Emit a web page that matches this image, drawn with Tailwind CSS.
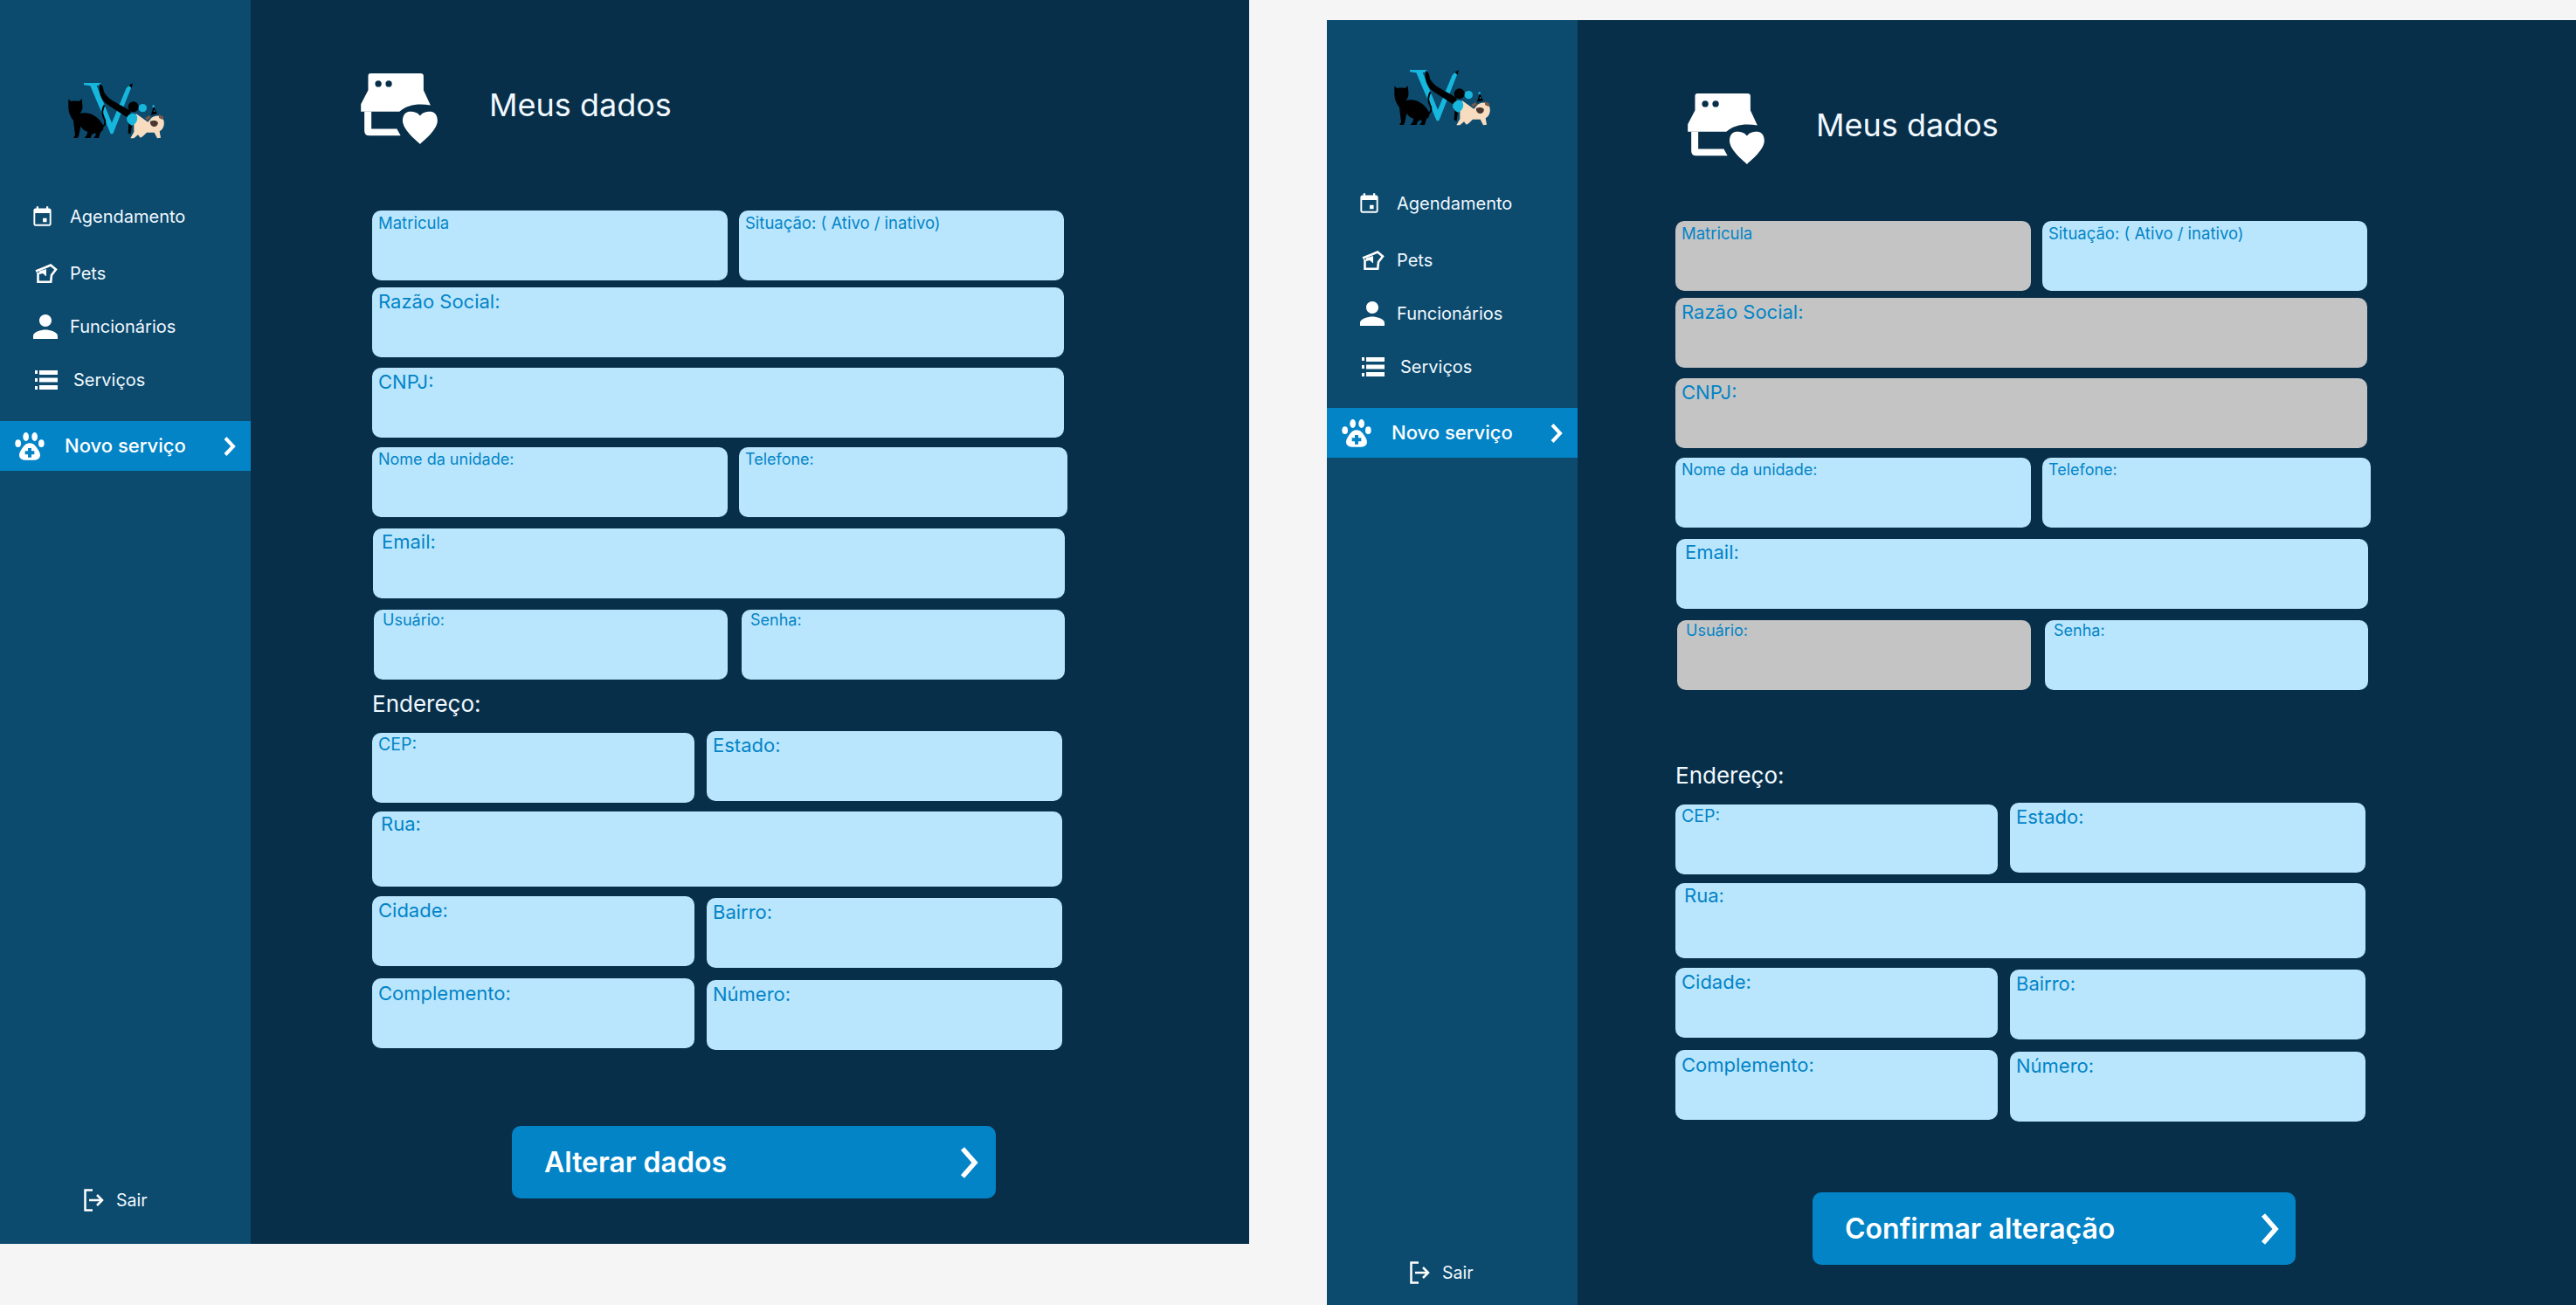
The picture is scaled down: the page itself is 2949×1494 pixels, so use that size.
<!DOCTYPE html>
<html lang="pt-BR">
<head>
    <meta charset="UTF-8">
    <title>Meus dados</title>
    <script src="https://cdn.jsdelivr.net/npm/@tailwindcss/browser@4"></script>
</head>
<body class="bg-[#f5f5f5] font-['Inter',sans-serif] overflow-hidden h-screen">
<div class="flex items-start gap-[89px] w-[2949px]">

    <!-- tela 1: meus dados -->
    <section class="flex w-[1430px] h-[1424px] shrink-0 bg-[#082f49]">
        <aside class="flex flex-col w-[287px] h-full shrink-0 bg-[#0c4a6e] pt-[85px] pb-[35px] text-[#f0f9ff]">
            <svg class="ml-[70px] shrink-0" width="125" height="80" viewBox="0 0 375 240">
                <path fill="#17b6dc" d="M78 30h58v7l-14 2 52 128 50-120 12-10 8 0-66 168h-8L100 40l-22-3z"/>
                <path fill="#000" d="M133 32c-6 28 2 56 26 72l76 50 4-28c-36-24-92-42-94-76-1-8-6-14-12-18zM232 38l14-7-4 16z"/>
                <path fill="#000" d="M25 86l10 7c8-2 18-2 26 0l10-8 2 20c2 12-2 22-8 30 14-4 34-2 50 8 14 8 24 22 30 34 2 10-2 18-10 22l-6 20h-18l8-10-2-8-12 6-4 12h-22l8-8 4-14c-10-2-18-8-24-18l-6 30-4 10H42l6-10-6-50c-8-10-16-24-17-44z"/>
                <path fill="none" stroke="#000" stroke-width="6" d="M135 182c18-4 20-18 12-32-6-12-10-26 2-44"/>
                <circle cx="248" cy="112" r="18" fill="#000"/>
                <circle cx="280" cy="116" r="14" fill="#17b6dc"/>
                <path fill="#000" d="M232 170l12 4-6 32-8-4z"/>
                <path fill="#f7dcc0" d="M258 136l40 28 12-14c14-12 36-10 42 8 4 14 0 30-14 38l4 22-12 2-10-20-26 0-14 14-8 4-8-10-14 12h-12l12-22 0-30-8-12z"/>
                <path fill="#17b6dc" d="M226 148c6-12 18-16 28-12 8 4 10 18 4 28-4 6-10 10-16 12-10-6-20-16-16-28z"/>
                <path fill="#7b5a48" d="M288 150l14-8 6 6-12 10zM336 138l16 8-4 10-12-6z"/>
                <path fill="#4a3730" d="M306 162c8-4 20-4 26 2 2 8-4 16-14 16-8-1-14-10-12-18z"/>
                <path fill="#000" d="M308 140l10-30 12 26z"/>
                <circle cx="317" cy="110" r="4" fill="#17b6dc"/>
                <circle cx="320" cy="126" r="2.5" fill="#17b6dc"/>
            </svg>
            <nav class="flex flex-col mt-[63px] text-[20px]">
                <a class="flex items-center h-10 pl-[35px] gap-[18px]">
                    <svg class="shrink-0" width="27" height="27" viewBox="0 0 24 24" fill="#fff"><path d="M16.5 13h-4v4h4v-4zM16 1v2H8V1H6v2H5c-1.11 0-1.99.9-1.99 2L3 19c0 1.1.89 2 2 2h14c1.1 0 2-.9 2-2V5c0-1.1-.9-2-2-2h-1V1h-2zm3.3 18.300H4.700V8h14.600v11.300z"/></svg>
                    <span>Agendamento</span>
                </a>
                <a class="flex items-center h-10 mt-[25px] pl-[40px] gap-[14px]">
                    <svg class="shrink-0" width="26" height="22" viewBox="0 0 26 22"><path fill="none" stroke="#fff" stroke-width="2.600" d="M1 8.500L11 4.500 18 1.500l6 5-5 6.500-.8 7.700H3.500v-11"/><path fill="#fff" d="M5 8.500l8-2.500v8.500l-4-3.500-4 1z"/></svg>
                    <span>Pets</span>
                </a>
                <a class="flex items-center h-10 mt-[21px] pl-[31px] gap-[7px]">
                    <svg class="shrink-0" width="42" height="42" viewBox="0 0 24 24" fill="#fff"><path d="M12 12c2.210 0 4-1.790 4-4s-1.790-4-4-4-4 1.790-4 4 1.790 4 4 4zm0 2c-2.670 0-8 1.340-8 4v2h16v-2c0-2.660-5.330-4-8-4z"/></svg>
                    <span>Funcionários</span>
                </a>
                <a class="flex items-center h-10 mt-[21px] pl-[40px] gap-[18px]">
                    <svg class="shrink-0" width="26" height="22" viewBox="0 0 26 22" fill="#fff"><path d="M0 0h3v4H0zM5 0h21v5H5zM0 9h3v4H0zM5 8.500h21v5H5zM0 18h3v4H0zM5 17h21v5H5z"/></svg>
                    <span>Serviços</span>
                </a>
                <a class="flex items-center h-[57px] mt-[27px] bg-[#0284c7] pl-[17px] gap-[23px] font-medium text-[22px] text-white">
                    <svg class="shrink-0" width="34" height="32" viewBox="24 45 102 96"><ellipse cx="35" cy="83" rx="10" ry="13" fill="#fff"/><ellipse cx="62" cy="60" rx="10" ry="15" fill="#fff"/><ellipse cx="92" cy="60" rx="10" ry="15" fill="#fff"/><ellipse cx="115" cy="83" rx="10" ry="13" fill="#fff"/><path fill="#fff" d="M75 82C60 82 52 95 44 108 36 120 36 138 58 140 68 140 82 140 92 140 114 138 114 120 106 108 98 95 90 82 75 82Z"/><path fill="#0284c7" d="M69 99h12v10h10v12H81v10H69v-10H59v-12h10z"/></svg>
                    <span>Novo serviço</span>
                    <svg class="ml-auto mr-[17px] shrink-0" width="14" height="22" viewBox="0 0 14 22"><path fill="none" stroke="#fff" stroke-width="4" d="M2 1.500L11 11 2 20.500"/></svg>
                </a>
            </nav>
            <a class="flex items-center mt-auto pl-[96px] gap-[14px] text-[19.5px]">
                <svg class="shrink-0" width="23" height="26" viewBox="0 0 23 26"><path fill="none" stroke="#fff" stroke-width="2.500" d="M10 1.500H1.500v23H10"/><path fill="none" stroke="#fff" stroke-width="2.500" d="M6 13h14M15 7l6 6-6 6"/></svg>
                <span>Sair</span>
            </a>
        </aside>
        <main class="flex-1 pt-[84px] pl-[126px]">
            <header class="flex items-center gap-[59px] h-[81px] text-[#f0f9ff] text-[36px]">
                <svg class="shrink-0" width="88" height="81" viewBox="39 72 264 244"><path fill="#fff" d="M72 72H245Q255 72 255 82V130L279 182C240 175 200 178 172 204H39V178L64 130V82Q64 72 72 72Z"/><circle cx="99" cy="108" r="11" fill="#082f49"/><circle cx="135" cy="108" r="11" fill="#082f49"/><path fill="#fff" d="M51 204V270Q51 287 68 287H176L163 263H75V204Z"/><path fill="#fff" d="M243 218C232 204 215 203 205 204 190 206 183 220 183 235 183 265 225 300 243 316 261 300 303 265 303 235 303 220 296 206 281 204 271 203 254 204 243 218Z"/></svg>
                <h1 class="pb-[9px]">Meus dados</h1>
            </header>
            <form class="flex flex-col mt-[76px] pl-[13px] text-[#0284c7]">
                <div class="flex gap-[13px]">
                    <div class="w-[407px] h-20 rounded-[10px] bg-[#bae6fd] pl-[7px] text-[18.5px] leading-[28px]">Matricula</div>
                    <div class="w-[372px] h-20 rounded-[10px] bg-[#bae6fd] pl-[7px] text-[18.5px] leading-[28px]">Situação: ( Ativo / inativo)</div>
                </div>
                <div class="w-[792px] h-20 mt-[8px] rounded-[10px] bg-[#bae6fd] pl-[7px] text-[22px] leading-[32px]">Razão Social:</div>
                <div class="w-[792px] h-20 mt-[12px] rounded-[10px] bg-[#bae6fd] pl-[7px] text-[22px] leading-[32px]">CNPJ:</div>
                <div class="flex gap-[13px] mt-[11px]">
                    <div class="w-[407px] h-20 rounded-[10px] bg-[#bae6fd] pl-[7px] text-[18px] leading-[28px]">Nome da unidade:</div>
                    <div class="w-[376px] h-20 rounded-[10px] bg-[#bae6fd] pl-[7px] text-[18px] leading-[28px]">Telefone:</div>
                </div>
                <div class="w-[792px] h-20 mt-[13px] ml-px rounded-[10px] bg-[#bae6fd] pl-[10px] text-[22px] leading-[30px]">Email:</div>
                <div class="flex gap-[16px] mt-[13px] ml-[2px]">
                    <div class="w-[405px] h-20 rounded-[10px] bg-[#bae6fd] pl-[10px] text-[18px] leading-[23px]">Usuário:</div>
                    <div class="w-[370px] h-20 rounded-[10px] bg-[#bae6fd] pl-[10px] text-[18px] leading-[23px]">Senha:</div>
                </div>
                <h2 class="mt-[11px] text-[#f0f9ff] text-[26px] leading-[34px]">Endereço:</h2>
                <div class="flex items-start gap-[14px] mt-[14px]">
                    <div class="w-[369px] h-20 mt-[2px] rounded-[10px] bg-[#bae6fd] pl-[7px] text-[19.5px] leading-[26px]">CEP:</div>
                    <div class="w-[407px] h-20 rounded-[10px] bg-[#bae6fd] pl-[7px] text-[22px] leading-[32px]">Estado:</div>
                </div>
                <div class="w-[790px] h-[86px] mt-[10px] rounded-[10px] bg-[#bae6fd] pl-[10px] text-[22px] leading-[28px]">Rua:</div>
                <div class="flex items-start gap-[14px] mt-[11px]">
                    <div class="w-[369px] h-20 rounded-[10px] bg-[#bae6fd] pl-[7px] text-[22px] leading-[32px]">Cidade:</div>
                    <div class="w-[407px] h-20 mt-[2px] rounded-[10px] bg-[#bae6fd] pl-[7px] text-[22px] leading-[32px]">Bairro:</div>
                </div>
                <div class="flex items-start gap-[14px] mt-[12px]">
                    <div class="w-[369px] h-20 rounded-[10px] bg-[#bae6fd] pl-[7px] text-[22px] leading-[34px]">Complemento:</div>
                    <div class="w-[407px] h-20 mt-[2px] rounded-[10px] bg-[#bae6fd] pl-[7px] text-[22px] leading-[32px]">Número:</div>
                </div>
                <button type="button" class="flex items-center justify-between w-[554px] h-[83px] mt-[87px] ml-[160px] rounded-[10px] bg-[#0284c7] pl-[37px] pr-[19px] text-[32px] font-semibold text-white">
                    <span>Alterar dados</span>
                    <svg class="shrink-0" width="22" height="36" viewBox="0 0 22 36"><path fill="none" stroke="#fff" stroke-width="5.500" d="M3 2l14 16L3 34"/></svg>
                </button>
            </form>
        </main>
    </section>

    <!-- tela 2: confirmar alteracao -->
    <section class="flex w-[1430px] h-[1471px] mt-[23px] shrink-0 bg-[#082f49]">
        <aside class="flex flex-col w-[287px] h-full shrink-0 bg-[#0c4a6e] pt-[47px] pb-[22px] text-[#f0f9ff]">
            <svg class="ml-[69px] shrink-0" width="125" height="80" viewBox="0 0 375 240">
                <path fill="#17b6dc" d="M78 30h58v7l-14 2 52 128 50-120 12-10 8 0-66 168h-8L100 40l-22-3z"/>
                <path fill="#000" d="M133 32c-6 28 2 56 26 72l76 50 4-28c-36-24-92-42-94-76-1-8-6-14-12-18zM232 38l14-7-4 16z"/>
                <path fill="#000" d="M25 86l10 7c8-2 18-2 26 0l10-8 2 20c2 12-2 22-8 30 14-4 34-2 50 8 14 8 24 22 30 34 2 10-2 18-10 22l-6 20h-18l8-10-2-8-12 6-4 12h-22l8-8 4-14c-10-2-18-8-24-18l-6 30-4 10H42l6-10-6-50c-8-10-16-24-17-44z"/>
                <path fill="none" stroke="#000" stroke-width="6" d="M135 182c18-4 20-18 12-32-6-12-10-26 2-44"/>
                <circle cx="248" cy="112" r="18" fill="#000"/>
                <circle cx="280" cy="116" r="14" fill="#17b6dc"/>
                <path fill="#000" d="M232 170l12 4-6 32-8-4z"/>
                <path fill="#f7dcc0" d="M258 136l40 28 12-14c14-12 36-10 42 8 4 14 0 30-14 38l4 22-12 2-10-20-26 0-14 14-8 4-8-10-14 12h-12l12-22 0-30-8-12z"/>
                <path fill="#17b6dc" d="M226 148c6-12 18-16 28-12 8 4 10 18 4 28-4 6-10 10-16 12-10-6-20-16-16-28z"/>
                <path fill="#7b5a48" d="M288 150l14-8 6 6-12 10zM336 138l16 8-4 10-12-6z"/>
                <path fill="#4a3730" d="M306 162c8-4 20-4 26 2 2 8-4 16-14 16-8-1-14-10-12-18z"/>
                <path fill="#000" d="M308 140l10-30 12 26z"/>
                <circle cx="317" cy="110" r="4" fill="#17b6dc"/>
                <circle cx="320" cy="126" r="2.5" fill="#17b6dc"/>
            </svg>
            <nav class="flex flex-col mt-[63px] text-[20px]">
                <a class="flex items-center h-10 pl-[35px] gap-[18px]">
                    <svg class="shrink-0" width="27" height="27" viewBox="0 0 24 24" fill="#fff"><path d="M16.5 13h-4v4h4v-4zM16 1v2H8V1H6v2H5c-1.11 0-1.99.9-1.99 2L3 19c0 1.1.89 2 2 2h14c1.1 0 2-.9 2-2V5c0-1.1-.9-2-2-2h-1V1h-2zm3.3 18.300H4.700V8h14.600v11.300z"/></svg>
                    <span>Agendamento</span>
                </a>
                <a class="flex items-center h-10 mt-[25px] pl-[40px] gap-[14px]">
                    <svg class="shrink-0" width="26" height="22" viewBox="0 0 26 22"><path fill="none" stroke="#fff" stroke-width="2.600" d="M1 8.500L11 4.500 18 1.500l6 5-5 6.500-.8 7.700H3.500v-11"/><path fill="#fff" d="M5 8.500l8-2.500v8.500l-4-3.500-4 1z"/></svg>
                    <span>Pets</span>
                </a>
                <a class="flex items-center h-10 mt-[21px] pl-[31px] gap-[7px]">
                    <svg class="shrink-0" width="42" height="42" viewBox="0 0 24 24" fill="#fff"><path d="M12 12c2.210 0 4-1.790 4-4s-1.790-4-4-4-4 1.790-4 4 1.790 4 4 4zm0 2c-2.670 0-8 1.340-8 4v2h16v-2c0-2.660-5.330-4-8-4z"/></svg>
                    <span>Funcionários</span>
                </a>
                <a class="flex items-center h-10 mt-[21px] pl-[40px] gap-[18px]">
                    <svg class="shrink-0" width="26" height="22" viewBox="0 0 26 22" fill="#fff"><path d="M0 0h3v4H0zM5 0h21v5H5zM0 9h3v4H0zM5 8.500h21v5H5zM0 18h3v4H0zM5 17h21v5H5z"/></svg>
                    <span>Serviços</span>
                </a>
                <a class="flex items-center h-[57px] mt-[27px] bg-[#0284c7] pl-[17px] gap-[23px] font-medium text-[22px] text-white">
                    <svg class="shrink-0" width="34" height="32" viewBox="24 45 102 96"><ellipse cx="35" cy="83" rx="10" ry="13" fill="#fff"/><ellipse cx="62" cy="60" rx="10" ry="15" fill="#fff"/><ellipse cx="92" cy="60" rx="10" ry="15" fill="#fff"/><ellipse cx="115" cy="83" rx="10" ry="13" fill="#fff"/><path fill="#fff" d="M75 82C60 82 52 95 44 108 36 120 36 138 58 140 68 140 82 140 92 140 114 138 114 120 106 108 98 95 90 82 75 82Z"/><path fill="#0284c7" d="M69 99h12v10h10v12H81v10H69v-10H59v-12h10z"/></svg>
                    <span>Novo serviço</span>
                    <svg class="ml-auto mr-[17px] shrink-0" width="14" height="22" viewBox="0 0 14 22"><path fill="none" stroke="#fff" stroke-width="4" d="M2 1.500L11 11 2 20.500"/></svg>
                </a>
            </nav>
            <a class="flex items-center mt-auto pl-[95px] gap-[14px] text-[19.5px]">
                <svg class="shrink-0" width="23" height="26" viewBox="0 0 23 26"><path fill="none" stroke="#fff" stroke-width="2.500" d="M10 1.500H1.500v23H10"/><path fill="none" stroke="#fff" stroke-width="2.500" d="M6 13h14M15 7l6 6-6 6"/></svg>
                <span>Sair</span>
            </a>
        </aside>
        <main class="flex-1 pt-[84px] pl-[126px]">
            <header class="flex items-center gap-[59px] h-[81px] text-[#f0f9ff] text-[36px]">
                <svg class="shrink-0" width="88" height="81" viewBox="39 72 264 244"><path fill="#fff" d="M72 72H245Q255 72 255 82V130L279 182C240 175 200 178 172 204H39V178L64 130V82Q64 72 72 72Z"/><circle cx="99" cy="108" r="11" fill="#082f49"/><circle cx="135" cy="108" r="11" fill="#082f49"/><path fill="#fff" d="M51 204V270Q51 287 68 287H176L163 263H75V204Z"/><path fill="#fff" d="M243 218C232 204 215 203 205 204 190 206 183 220 183 235 183 265 225 300 243 316 261 300 303 265 303 235 303 220 296 206 281 204 271 203 254 204 243 218Z"/></svg>
                <h1 class="pb-[9px]">Meus dados</h1>
            </header>
            <form class="flex flex-col mt-[65px] -ml-[14px] text-[#0284c7]">
                <div class="flex gap-[13px]">
                    <div class="w-[407px] h-20 rounded-[10px] bg-[#c4c4c4] pl-[7px] text-[18.5px] leading-[28px]">Matricula</div>
                    <div class="w-[372px] h-20 rounded-[10px] bg-[#bae6fd] pl-[7px] text-[18.5px] leading-[28px]">Situação: ( Ativo / inativo)</div>
                </div>
                <div class="w-[792px] h-20 mt-[8px] rounded-[10px] bg-[#c4c4c4] pl-[7px] text-[22px] leading-[32px]">Razão Social:</div>
                <div class="w-[792px] h-20 mt-[12px] rounded-[10px] bg-[#c4c4c4] pl-[7px] text-[22px] leading-[32px]">CNPJ:</div>
                <div class="flex gap-[13px] mt-[11px]">
                    <div class="w-[407px] h-20 rounded-[10px] bg-[#bae6fd] pl-[7px] text-[18px] leading-[28px]">Nome da unidade:</div>
                    <div class="w-[376px] h-20 rounded-[10px] bg-[#bae6fd] pl-[7px] text-[18px] leading-[28px]">Telefone:</div>
                </div>
                <div class="w-[792px] h-20 mt-[13px] ml-px rounded-[10px] bg-[#bae6fd] pl-[10px] text-[22px] leading-[30px]">Email:</div>
                <div class="flex gap-[16px] mt-[13px] ml-[2px]">
                    <div class="w-[405px] h-20 rounded-[10px] bg-[#c4c4c4] pl-[10px] text-[18px] leading-[23px]">Usuário:</div>
                    <div class="w-[370px] h-20 rounded-[10px] bg-[#bae6fd] pl-[10px] text-[18px] leading-[23px]">Senha:</div>
                </div>
                <h2 class="mt-[81px] text-[#f0f9ff] text-[26px] leading-[34px]">Endereço:</h2>
                <div class="flex items-start gap-[14px] mt-[14px]">
                    <div class="w-[369px] h-20 mt-[2px] rounded-[10px] bg-[#bae6fd] pl-[7px] text-[19.5px] leading-[26px]">CEP:</div>
                    <div class="w-[407px] h-20 rounded-[10px] bg-[#bae6fd] pl-[7px] text-[22px] leading-[32px]">Estado:</div>
                </div>
                <div class="w-[790px] h-[86px] mt-[10px] rounded-[10px] bg-[#bae6fd] pl-[10px] text-[22px] leading-[28px]">Rua:</div>
                <div class="flex items-start gap-[14px] mt-[11px]">
                    <div class="w-[369px] h-20 rounded-[10px] bg-[#bae6fd] pl-[7px] text-[22px] leading-[32px]">Cidade:</div>
                    <div class="w-[407px] h-20 mt-[2px] rounded-[10px] bg-[#bae6fd] pl-[7px] text-[22px] leading-[32px]">Bairro:</div>
                </div>
                <div class="flex items-start gap-[14px] mt-[12px]">
                    <div class="w-[369px] h-20 rounded-[10px] bg-[#bae6fd] pl-[7px] text-[22px] leading-[34px]">Complemento:</div>
                    <div class="w-[407px] h-20 mt-[2px] rounded-[10px] bg-[#bae6fd] pl-[7px] text-[22px] leading-[32px]">Número:</div>
                </div>
                <button type="button" class="flex items-center justify-between w-[553px] h-[83px] mt-[81px] ml-[157px] rounded-[10px] bg-[#0284c7] pl-[37px] pr-[18px] text-[32px] font-semibold text-white">
                    <span>Confirmar alteração</span>
                    <svg class="shrink-0" width="22" height="36" viewBox="0 0 22 36"><path fill="none" stroke="#fff" stroke-width="5.500" d="M3 2l14 16L3 34"/></svg>
                </button>
            </form>
        </main>
    </section>
</div>
</body>
</html>
